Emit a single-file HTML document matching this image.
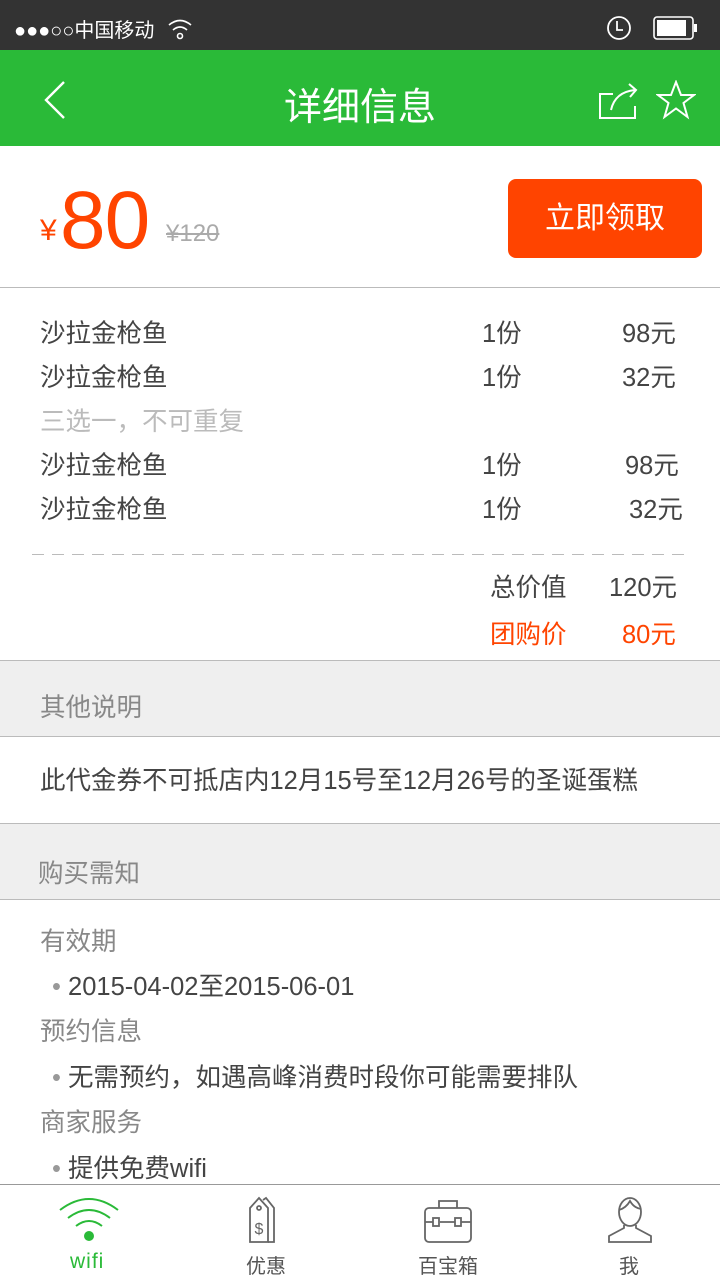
<!DOCTYPE html>
<html><head><meta charset="utf-8"><style>
*{margin:0;padding:0;box-sizing:border-box}
body{width:720px;height:1280px;position:relative;background:#fff;font-family:"Liberation Sans","Noto Sans CJK SC",sans-serif;overflow:hidden;color:#333}
.a{position:absolute;white-space:nowrap}
.sb{top:0;left:0;width:720px;height:50px;background:#333;color:#fff}
.nav{top:50px;left:0;width:720px;height:96px;background:#2aba38}
.t{font-size:25.5px;color:#444}
.g{background:#efefef;left:0;width:720px}
.hr{left:0;width:720px;height:1px;background:#bbb}
</style></head><body>
<div class="a sb">
 <div class="a" style="left:14px;top:14px;font-size:20px">●●●○○中国移动</div>
 <svg class="a" style="left:166px;top:16px" width="28" height="26" viewBox="0 0 28 26" fill="none" stroke="#fff" stroke-width="1.6"><path d="M3 9 Q14 0 25 9"/><path d="M7 14 Q14 8 21 14"/><circle cx="14" cy="20" r="2.5"/></svg>
 <svg class="a" style="left:606px;top:15px" width="26" height="26" viewBox="0 0 26 26" fill="none" stroke="#fff" stroke-width="1.8"><circle cx="13" cy="13" r="11"/><path d="M11 6v9h6"/></svg>
 <svg class="a" style="left:653px;top:16px" width="46" height="24" viewBox="0 0 46 24"><rect x="1" y="1" width="39" height="22" rx="3" fill="none" stroke="#fff" stroke-width="1.6"/><rect x="4" y="4" width="29" height="16" fill="#fff"/><rect x="41" y="8" width="3" height="8" fill="#fff"/></svg>
</div>
<div class="a nav">
 <svg class="a" style="left:40px;top:28px" width="30" height="44" viewBox="0 0 30 44" fill="none" stroke="#fff" stroke-width="2.4"><path d="M24 4 L6 22 L24 40"/></svg>
 <div class="a" style="left:0;width:720px;text-align:center;top:26px;font-size:38px;color:#fff">详细信息</div>
 <svg class="a" style="left:597px;top:30px" width="44" height="42" viewBox="0 0 44 42" fill="none" stroke="#fff" stroke-width="2"><path d="M16 14 H3 V38 H38 V26"/><path d="M14 30 Q18 12 38 10"/><path d="M32 4 L39 10 L33 17"/></svg>
 <svg class="a" style="left:656px;top:30px" width="40" height="40" viewBox="0 0 40 40" fill="none" stroke="#fff" stroke-width="2"><path d="M20 2 L25 15 L38 15 L27.5 23 L31.5 37 L20 28.5 L8.5 37 L12.5 23 L2 15 L15 15 Z"/></svg>
</div>
<div class="a" style="left:40px;top:214px;font-size:30px;color:#ff4400">¥</div>
<div class="a" style="left:60px;top:174px;font-size:82px;color:#ff4400;letter-spacing:-1px">80</div>
<div class="a" style="left:166px;top:220px;font-size:24px;color:#aaa;text-decoration:line-through">¥120</div>
<div class="a" style="left:508px;top:179px;width:194px;height:79px;background:#ff4400;border-radius:8px;color:#fff;font-size:30px;text-align:center;line-height:79px">立即领取</div>
<div class="a hr" style="top:287px"></div>
<div class="a t" style="left:40px;top:313px">沙拉金枪鱼</div><div class="a t" style="left:482px;top:313px">1份</div><div class="a t" style="left:622px;top:313px">98元</div>
<div class="a t" style="left:40px;top:357px">沙拉金枪鱼</div><div class="a t" style="left:482px;top:357px">1份</div><div class="a t" style="left:622px;top:357px">32元</div>
<div class="a t" style="left:40px;top:401px;color:#bbb">三选一，不可重复</div>
<div class="a t" style="left:40px;top:445px">沙拉金枪鱼</div><div class="a t" style="left:482px;top:445px">1份</div><div class="a t" style="left:625px;top:445px">98元</div>
<div class="a t" style="left:40px;top:489px">沙拉金枪鱼</div><div class="a t" style="left:482px;top:489px">1份</div><div class="a t" style="left:629px;top:489px">32元</div>
<div class="a" style="left:32px;top:554px;width:654px;height:1px;background:repeating-linear-gradient(90deg,#bbb 0 12px,transparent 12px 20px)"></div>
<div class="a t" style="left:490px;top:567px">总价值</div><div class="a t" style="left:609px;top:567px">120元</div>
<div class="a t" style="left:490px;top:614px;color:#ff4400">团购价</div><div class="a t" style="left:622px;top:614px;color:#ff4400">80元</div>
<div class="a hr" style="top:660px"></div>
<div class="a g" style="top:661px;height:75px"></div>
<div class="a t" style="left:40px;top:687px;color:#888">其他说明</div>
<div class="a hr" style="top:736px"></div>
<div class="a t" style="left:40px;top:760px">此代金券不可抵店内12月15号至12月26号的圣诞蛋糕</div>
<div class="a hr" style="top:823px"></div>
<div class="a g" style="top:824px;height:75px"></div>
<div class="a t" style="left:38px;top:853px;color:#888">购买需知</div>
<div class="a hr" style="top:899px"></div>
<div class="a t" style="left:40px;top:921px;color:#888">有效期</div>
<div class="a t" style="left:52px;top:966px"><span style="color:#999">•</span> 2015-04-02至2015-06-01</div>
<div class="a t" style="left:40px;top:1011px;color:#888">预约信息</div>
<div class="a t" style="left:52px;top:1057px"><span style="color:#999">•</span> 无需预约，如遇高峰消费时段你可能需要排队</div>
<div class="a t" style="left:40px;top:1102px;color:#888">商家服务</div>
<div class="a t" style="left:52px;top:1148px"><span style="color:#999">•</span> 提供免费wifi</div>
<div class="a" style="left:0;top:1184px;width:720px;height:96px;background:#fff;border-top:1px solid #999"></div>
<svg class="a" style="left:58px;top:1194px" width="62" height="50" viewBox="0 0 62 50" fill="none" stroke="#2aba38" stroke-width="2"><path d="M2 16 Q31 -6 60 16"/><path d="M10 24 Q31 8 52 24"/><path d="M18 32 Q31 22 44 32"/><circle cx="31" cy="42" r="5" fill="#2aba38" stroke="none"/></svg>
<div class="a" style="left:70px;top:1250px;font-size:21px;color:#2aba38;letter-spacing:1px">wifi</div>
<svg class="a" style="left:246px;top:1196px" width="46" height="48" viewBox="0 0 46 48" fill="none" stroke="#666" stroke-width="1.8"><path d="M4 12 L13 2 L22 12 V46 H4 Z"/><path d="M17 4 L20 2 L28 12 V46 H22"/><circle cx="13" cy="12" r="2"/><text x="13" y="38" font-size="16" fill="#666" stroke="none" text-anchor="middle" font-family="Liberation Sans">$</text></svg>
<div class="a" style="left:246px;top:1250px;font-size:20px;color:#555">优惠</div>
<svg class="a" style="left:423px;top:1198px" width="50" height="46" viewBox="0 0 50 46" fill="none" stroke="#666" stroke-width="1.8"><rect x="2" y="10" width="46" height="34" rx="4"/><path d="M16 10 V3 H34 V10"/><path d="M2 24 H10 M17 24 H32 M38 24 H48"/><rect x="10" y="20" width="6" height="8"/><rect x="32" y="20" width="6" height="8"/></svg>
<div class="a" style="left:418px;top:1250px;font-size:20px;color:#555">百宝箱</div>
<svg class="a" style="left:606px;top:1196px" width="48" height="48" viewBox="0 0 48 48" fill="none" stroke="#666" stroke-width="1.8"><ellipse cx="24" cy="16" rx="11" ry="14"/><path d="M13 14 Q20 12 24 5 Q28 12 35 13"/><path d="M18 29 L18 32 L3 40 V46 H45 V40 L30 32 V29"/></svg>
<div class="a" style="left:619px;top:1250px;font-size:20px;color:#555">我</div>
</body></html>
